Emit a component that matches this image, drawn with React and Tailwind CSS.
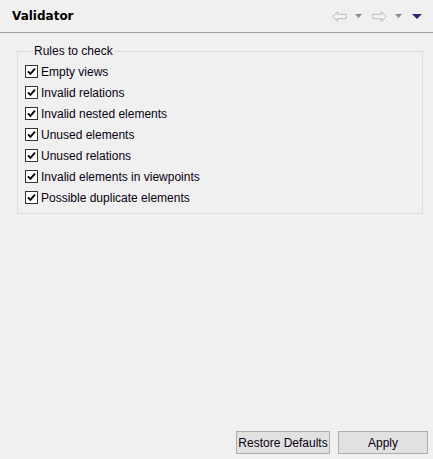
import { useState } from 'react';

const rules = [
  'Empty views',
  'Invalid relations',
  'Invalid nested elements',
  'Unused elements',
  'Unused relations',
  'Invalid elements in viewpoints',
  'Possible duplicate elements',
];

function ArrowIcon({ flip }) {
  return (
    <svg width="15" height="11" viewBox="0 0 15 11" className={flip ? '-scale-x-100' : ''}>
      <path
        d="M0.8 5.5 L5.5 0.8 L5.5 3.3 L14.2 3.3 L14.2 7.7 L5.5 7.7 L5.5 10.2 Z"
        fill="#f4f4f4"
        stroke="#b9b9b9"
        strokeWidth="1"
        strokeLinejoin="miter"
      />
    </svg>
  );
}

function SmallDrop({ color = '#8a8a8a', w = 7, h = 4 }) {
  return (
    <svg width={w} height={h} viewBox={`0 0 ${w} ${h}`}>
      <path d={`M0 0 L${w} 0 L${w / 2} ${h} Z`} fill={color} />
    </svg>
  );
}

function Check({ checked, onToggle, label }) {
  return (
    <button type="button" onClick={onToggle} className="flex h-[21px] items-center gap-[3px] text-left">
      <span className="flex h-[13px] w-[13px] items-center justify-center border border-[#333333] bg-white">
        {checked && (
          <svg width="9" height="9" viewBox="0 0 9 9">
            <path d="M1 4.4 L3.4 6.8 L8 1.6" fill="none" stroke="#000" strokeWidth="1.9" />
          </svg>
        )}
      </span>
      <span>{label}</span>
    </button>
  );
}

export default function App() {
  const [checked, setChecked] = useState(rules.map(() => true));

  function toggle(i) {
    setChecked((current) => current.map((v, j) => (j === i ? !v : v)));
  }

  return (
    <div className="flex h-[459px] w-[433px] flex-col bg-[#f0f0f0] font-['Liberation_Sans',sans-serif] text-[12px] text-[#0a0010]">
      <div className="flex h-[33px] items-center border-b border-[#a0a0a0] pl-[12px] pr-[11px]">
        <span className="font-['DejaVu_Sans',sans-serif] text-[12px] font-bold text-black">Validator</span>
        <div className="ml-auto flex items-center">
          <ArrowIcon />
          <span className="ml-[8px] flex"><SmallDrop /></span>
          <span className="ml-[10px] flex"><ArrowIcon flip /></span>
          <span className="ml-[8px] flex"><SmallDrop /></span>
          <span className="ml-[10px] flex"><SmallDrop color="#3b1f6a" w={10} h={5} /></span>
        </div>
      </div>

      <fieldset className="mx-[10px] ml-[17px] mt-[11px] border border-[#dcdcdc] pb-[5px] pl-[7px]">
        <legend className="ml-[8px] px-[1px] leading-[15px]">Rules to check</legend>
        <div className="mt-[2px] flex flex-col items-start">
          {rules.map((rule, i) => (
            <Check key={rule} label={rule} checked={checked[i]} onToggle={() => toggle(i)} />
          ))}
        </div>
      </fieldset>

      <div className="mt-auto flex justify-end gap-[8px] pb-[5px] pr-[5px]">
        <button type="button" className="h-[23px] w-[94px] whitespace-nowrap border border-[#adadad] bg-[#e1e1e1]">
          Restore Defaults
        </button>
        <button type="button" className="h-[23px] w-[90px] border border-[#adadad] bg-[#e1e1e1]">
          Apply
        </button>
      </div>
    </div>
  );
}
